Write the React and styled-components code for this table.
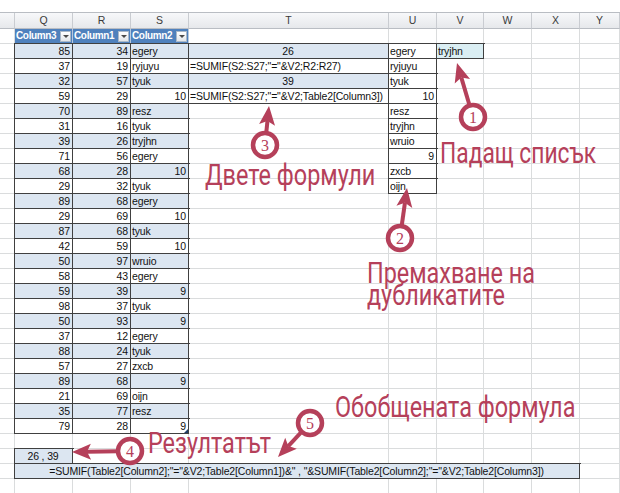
import React from "react"
import styled, { createGlobalStyle } from "styled-components"

const RED = "#b5405a"
const GRID = "#dadcdd"
const LINE = "#404040"
const BAND = "#dce6f1"
const COLS = "15px 58px 58px 58px 200px 48px 47px 48px 48px 1fr"

const GlobalStyle = createGlobalStyle`
  html, body { margin: 0; padding: 0; background: #fff; overflow: hidden; }
  body { font-family: "Liberation Sans", Arial, sans-serif; }
`

const Sheet = styled.div`
  position: relative;
  width: 620px;
  height: 493px;
  overflow: hidden;
  background: #fff;
`

const TopStrip = styled.div`
  height: 12px;
  border-bottom: 1px solid #b9bdc3;
`

const Grid = styled.div`
  display: grid;
  grid-template-columns: ${COLS};
  grid-template-rows: 16px;
  grid-auto-rows: 15px;
`

const ColHead = styled.div`
  box-sizing: border-box;
  border-right: 1px solid #c9ccd1;
  border-bottom: 1px solid #b9bdc3;
  background: linear-gradient(#f7f8fa, #e6e8eb);
  color: #3a3a3a;
  font-size: 10.5px;
  line-height: 15px;
  text-align: center;
`

const Cell = styled.div`
  box-sizing: border-box;
  grid-column: ${p => (p.$span ? `span ${p.$span}` : "auto")};
  border-right: 1px solid ${p => (p.$boxed ? LINE : GRID)};
  border-bottom: 1px solid ${p => (p.$boxed ? LINE : GRID)};
  box-shadow: ${p => (p.$boxed ? `0 0 0 1px ${LINE}` : "none")};
  background: ${p => p.$fill || "#fff"};
  text-align: ${p => p.$align || "left"};
  padding: 0 2px 0 1px;
  font-size: 10.5px;
  letter-spacing: -0.15px;
  line-height: 14px;
  color: #111;
  white-space: nowrap;
  overflow: hidden;
  position: relative;
`

const TableHead = styled.div`
  box-sizing: border-box;
  display: flex;
  align-items: center;
  justify-content: space-between;
  padding: 0 1px 0 1px;
  background: #4f81bd;
  border-right: 1px solid #b8c9de;
  border-bottom: 1px solid ${LINE};
  color: #fff;
  font-weight: bold;
  font-size: 10px;
  letter-spacing: -0.35px;
  line-height: 14px;
  white-space: nowrap;
`

const DropButton = styled.span`
  box-sizing: border-box;
  flex: none;
  width: 11px;
  height: 11px;
  display: flex;
  align-items: center;
  justify-content: center;
  background: linear-gradient(#ffffff, #e3e6ea);
  border: 1px solid #aab8c8;
  &::after {
    content: "";
    border-left: 3px solid transparent;
    border-right: 3px solid transparent;
    border-top: 3px solid #4a4a4a;
  }
`

const Handle = styled.span`
  position: absolute;
  right: 0;
  bottom: 0;
  border-left: 4px solid transparent;
  border-bottom: 4px solid #1f3b66;
`

const Overlay = styled.svg`
  position: absolute;
  left: 0;
  top: 0;
  pointer-events: none;
`

const Note = styled.div`
  position: absolute;
  left: ${p => p.$x}px;
  top: ${p => p.$y}px;
  font-family: Roboto, "Liberation Sans", sans-serif;
  font-size: 30px;
  line-height: 20px;
  color: ${RED};
  white-space: nowrap;
  transform: scaleX(${p => p.$sx || 0.78});
  transform-origin: 0 0;
  pointer-events: none;
`

const letters = ["", "Q", "R", "S", "T", "U", "V", "W", "X", "Y"]

const data = [
  [85, 34, "egery"], [37, 19, "ryjuyu"], [32, 57, "tyuk"], [59, 29, 10],
  [70, 89, "resz"], [31, 16, "tyuk"], [39, 26, "tryjhn"], [71, 56, "egery"],
  [68, 28, 10], [29, 32, "tyuk"], [89, 68, "egery"], [29, 69, 10],
  [87, 68, "tyuk"], [42, 59, 10], [50, 97, "wruio"], [58, 43, "egery"],
  [59, 39, 9], [98, 37, "tyuk"], [50, 93, 9], [37, 12, "egery"],
  [88, 24, "tyuk"], [57, 27, "zxcb"], [89, 68, 9], [21, 69, "oijn"],
  [35, 77, "resz"], [79, 28, 9],
]

const unique = ["egery", "ryjuyu", "tyuk", 10, "resz", "tryjhn", "wruio", 9, "zxcb", "oijn"]

const tCells = [
  { text: "26", fill: BAND, align: "center" },
  { text: '=SUMIF(S2:S27;"="&V2;R2:R27)' },
  { text: "39", fill: BAND, align: "center" },
  { text: '=SUMIF(S2:S27;"="&V2;Table2[Column3])' },
]

const bigFormula =
  '=SUMIF(Table2[Column2];"="&V2;Table2[Column1])&" , "&SUMIF(Table2[Column2];"="&V2;Table2[Column3])'

const alignOf = v => (typeof v === "number" ? "right" : "left")

const Empty = ({ n }) => Array.from({ length: n }, (_, i) => <Cell key={"e" + i} />)

const Marker = ({ cx, cy, tx, ty, n }) => {
  const dx = tx - cx
  const dy = ty - cy
  const len = Math.hypot(dx, dy)
  const ux = dx / len
  const uy = dy / len
  const px = -uy
  const py = ux
  const r = 12
  const head = 19
  const half = 8
  const bx = tx - ux * head
  const by = ty - uy * head
  const nx = bx + ux * 4
  const ny = by + uy * 4
  return (
    <g>
      <line x1={cx + ux * r} y1={cy + uy * r} x2={nx} y2={ny} stroke={RED} strokeWidth="4" />
      <polygon
        points={`${tx},${ty} ${bx + px * half},${by + py * half} ${nx},${ny} ${bx - px * half},${by - py * half}`}
        fill={RED}
      />
      <circle cx={cx} cy={cy} r={r} fill="#fff" stroke={RED} strokeWidth="4.5" />
      <text
        x={cx}
        y={cy + 5.5}
        textAnchor="middle"
        fontFamily="'Liberation Serif', serif"
        fontSize="16"
        fill={RED}
      >
        {n}
      </text>
    </g>
  )
}

const BodyRow = ({ row }) => {
  const cells = [<Cell key="p" />]
  if (row === 1) {
    ;["Column3", "Column1", "Column2"].forEach(h =>
      cells.push(
        <TableHead key={h}>
          {h}
          <DropButton />
        </TableHead>
      )
    )
    cells.push(<Empty key="rest" n={6} />)
    return cells
  }
  if (row >= 2 && row <= 27) {
    const [q, r, s] = data[row - 2]
    const fill = row % 2 === 0 ? BAND : "#fff"
    cells.push(<Cell key="q" $boxed $fill={fill} $align="right">{q}</Cell>)
    cells.push(<Cell key="r" $boxed $fill={fill} $align="right">{r}</Cell>)
    cells.push(
      <Cell key="s" $boxed $fill={fill} $align={alignOf(s)}>
        {s}
        {row === 27 && <Handle />}
      </Cell>
    )
    const t = tCells[row - 2]
    cells.push(
      t ? (
        <Cell key="t" $boxed $fill={t.fill} $align={t.align}>{t.text}</Cell>
      ) : (
        <Cell key="t" />
      )
    )
    const u = unique[row - 2]
    cells.push(
      u !== undefined ? (
        <Cell key="u" $boxed $align={alignOf(u)}>{u}</Cell>
      ) : (
        <Cell key="u" />
      )
    )
    cells.push(
      row === 2 ? (
        <Cell key="v" $boxed $fill="#daeef3">tryjhn</Cell>
      ) : (
        <Cell key="v" />
      )
    )
    cells.push(<Empty key="rest" n={3} />)
    return cells
  }
  if (row === 29) {
    cells.push(<Cell key="q" $boxed $fill={BAND} $align="center">26 , 39</Cell>)
    cells.push(<Empty key="rest" n={8} />)
    return cells
  }
  if (row === 30) {
    cells.push(
      <Cell key="q" $span={8} $boxed $fill={BAND} $align="center">{bigFormula}</Cell>
    )
    cells.push(<Cell key="y" />)
    return cells
  }
  cells.push(<Empty key="rest" n={9} />)
  return cells
}

export default function App() {
  const rows = Array.from({ length: 31 }, (_, i) => i + 1)
  return (
    <Sheet>
      <GlobalStyle />
      <TopStrip />
      <Grid>
        {letters.map((l, i) => (
          <ColHead key={"h" + i}>{l}</ColHead>
        ))}
        {rows.map(r => (
          <BodyRow key={r} row={r} />
        ))}
      </Grid>

      <Overlay width="620" height="493" viewBox="0 0 620 493">
        <Marker cx={473} cy={117} tx={457} ty={63} n="1" />
        <Marker cx={400} cy={238} tx={407} ty={188} n="2" />
        <Marker cx={265} cy={145} tx={269} ty={106} n="3" />
        <Marker cx={130} cy={451} tx={72} ty={452} n="4" />
        <Marker cx={310} cy={423} tx={278} ty={457} n="5" />
      </Overlay>

      <Note $x={440} $y={143} $sx={0.76}>Падащ списък</Note>
      <Note $x={205} $y={165}>Двете формули</Note>
      <Note $x={367} $y={263}>Премахване на</Note>
      <Note $x={367} $y={285}>дубликатите</Note>
      <Note $x={335} $y={397}>Обобщената формула</Note>
      <Note $x={148} $y={433}>Резултатът</Note>
    </Sheet>
  )
}
